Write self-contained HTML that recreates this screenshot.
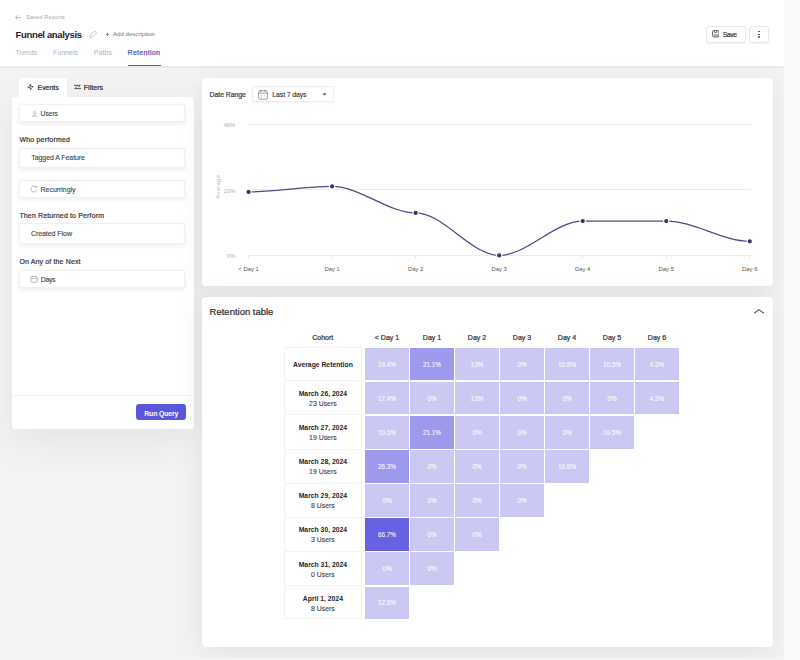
<!DOCTYPE html>
<html><head><meta charset="utf-8"><style>
html,body{margin:0;padding:0;width:800px;height:660px;overflow:hidden;background:#f2f2f2}
body{position:relative;font-family:"Liberation Sans",sans-serif}
.b{position:absolute}
.t{position:absolute;white-space:nowrap;line-height:1}
</style></head><body>
<div class="b" style="left:0px;top:0px;width:784px;height:660px;background:#f3f3f3"></div>
<div class="b" style="left:0px;top:0px;width:784px;height:66px;background:#fff;box-shadow:0 1px 2px rgba(0,0,0,0.08)"></div>
<svg class="b" style="left:14px;top:14px" width="8" height="7" viewBox="0 0 8 7"><path d="M7 3.5H1.5M3.8 1.2L1.3 3.5L3.8 5.8" fill="none" stroke="#b5b5b5" stroke-width="0.9"/></svg>
<div class="t" style="left:26.00px;top:15px;font-size:5.8px;color:#a9a9a9;font-weight:normal;letter-spacing:0.053px;">Saved Reports</div>
<div class="t" style="left:15.60px;top:30px;font-size:9.5px;color:#1e1e1e;font-weight:bold;letter-spacing:-0.348px;">Funnel analysis</div>
<svg class="b" style="left:88.6px;top:29.8px" width="8.5" height="8.5" viewBox="0 0 8.5 8.5"><path d="M0.9 5.6L5.6 0.9L7.6 2.9L2.9 7.6L0.6 7.9Z M1.6 4.9L3.6 6.9" fill="none" stroke="#c2c2c2" stroke-width="0.85" stroke-linejoin="round"/></svg>
<svg class="b" style="left:105px;top:31.5px" width="5" height="5" viewBox="0 0 5 5"><path d="M2.5 0.9V4.1M0.9 2.5H4.1" stroke="#6a6a6a" stroke-width="0.75"/></svg>
<div class="t" style="left:113.00px;top:31px;font-size:6.1px;color:#777;font-weight:normal;letter-spacing:-0.003px;">Add description</div>
<div class="t" style="left:15.60px;top:49px;font-size:7.0px;color:#b3b3b3;font-weight:normal;letter-spacing:-0.025px;">Trends</div>
<div class="t" style="left:53.00px;top:49px;font-size:7.0px;color:#b3b3b3;font-weight:normal;letter-spacing:0.016px;">Funnels</div>
<div class="t" style="left:93.75px;top:49px;font-size:7.0px;color:#b3b3b3;font-weight:normal;letter-spacing:0.088px;">Paths</div>
<div class="t" style="left:127.50px;top:49px;font-size:7.2px;color:#5656b4;font-weight:normal;letter-spacing:0.210px;-webkit-text-stroke:0.22px currentColor">Retention</div>
<div class="b" style="left:127.5px;top:64.5px;width:33.0px;height:1.5px;background:#5c5cb8"></div>
<div class="b" style="left:706px;top:25.5px;width:40px;height:17.5px;background:#fff;border:1px solid #e8e8e8;border-radius:3px;box-sizing:border-box;box-shadow:0 1px 2px rgba(0,0,0,0.05)"></div>
<svg class="b" style="left:711.6px;top:30.4px" width="7.5" height="7.5" viewBox="0 0 7.5 7.5"><rect x="0.55" y="0.55" width="6.4" height="6.4" rx="1.2" fill="none" stroke="#555" stroke-width="0.9"/><path d="M2.5 0.6V2.4H5V0.6M2.3 6.9V4.7H5.2V6.9" fill="none" stroke="#555" stroke-width="0.8"/></svg>
<div class="t" style="left:722.70px;top:32px;font-size:6.8px;color:#3a3a3a;font-weight:normal;letter-spacing:-0.399px;-webkit-text-stroke:0.22px currentColor">Save</div>
<div class="b" style="left:749px;top:25.5px;width:20px;height:17.5px;background:#fff;border:1px solid #e8e8e8;border-radius:3px;box-sizing:border-box;box-shadow:0 1px 2px rgba(0,0,0,0.05)"></div>
<div class="b" style="left:758.3px;top:30.8px;width:1.400000000000091px;height:1.4000000000000021px;background:#444;border-radius:1px"></div>
<div class="b" style="left:758.3px;top:33.6px;width:1.400000000000091px;height:1.3999999999999986px;background:#444;border-radius:1px"></div>
<div class="b" style="left:758.3px;top:36.4px;width:1.400000000000091px;height:1.3999999999999986px;background:#444;border-radius:1px"></div>
<div class="b" style="left:12px;top:97px;width:181.7px;height:331.7px;background:#fff;border-radius:0 3px 3px 3px;box-shadow:0 10px 40px rgba(0,0,0,0.07)"></div>
<div class="b" style="left:19.4px;top:78px;width:47.6px;height:19.5px;background:#fff;border-radius:3px 3px 0 0"></div>
<svg class="b" style="left:27.3px;top:83px" width="7" height="8" viewBox="0 0 24 24"><polygon points="13 2 3 14 12 14 11 22 21 10 12 10 13 2" fill="none" stroke="#3a3a3a" stroke-width="2.6" stroke-linejoin="round"/></svg>
<div class="t" style="left:37.50px;top:84px;font-size:7.0px;color:#2e2e2e;font-weight:normal;letter-spacing:-0.030px;-webkit-text-stroke:0.22px currentColor">Events</div>
<svg class="b" style="left:74px;top:84px" width="7" height="6" viewBox="0 0 7 6"><path d="M0.4 1.4H6.3L4.6 2.9M6.6 4.6H0.7L2.4 3.1" fill="none" stroke="#3a3a3a" stroke-width="0.85" stroke-linejoin="round" stroke-linecap="round"/></svg>
<div class="t" style="left:83.75px;top:84px;font-size:7.0px;color:#2e2e2e;font-weight:normal;letter-spacing:0.033px;-webkit-text-stroke:0.22px currentColor">Filters</div>
<div class="b" style="left:19.2px;top:104px;width:166.20000000000002px;height:18.299999999999997px;background:#fff;border:1px solid #f0f0f0;border-radius:1.5px;box-sizing:border-box;box-shadow:0 2px 5px rgba(0,0,0,0.07)"></div>
<svg class="b" style="left:31.5px;top:110.5px" width="5" height="6.5" viewBox="0 0 5 6.5"><circle cx="2.5" cy="1.7" r="1.15" fill="none" stroke="#aaa" stroke-width="0.7"/><path d="M0.5 6Q0.6 3.9 2.5 3.9Q4.4 3.9 4.5 6Z" fill="none" stroke="#aaa" stroke-width="0.7"/></svg>
<div class="t" style="left:40.60px;top:111px;font-size:6.9px;color:#444;font-weight:normal;letter-spacing:-0.154px;-webkit-text-stroke:0.12px currentColor">Users</div>
<div class="t" style="left:19.40px;top:136px;font-size:7.0px;color:#3a3a3a;font-weight:normal;letter-spacing:0.196px;-webkit-text-stroke:0.22px currentColor">Who performed</div>
<div class="b" style="left:19.2px;top:147.5px;width:166.20000000000002px;height:20.5px;background:#fff;border:1px solid #f0f0f0;border-radius:1.5px;box-sizing:border-box;box-shadow:0 2px 5px rgba(0,0,0,0.07)"></div>
<div class="t" style="left:31.25px;top:154px;font-size:7.0px;color:#444;font-weight:normal;letter-spacing:-0.075px;-webkit-text-stroke:0.12px currentColor">Tagged A Feature</div>
<div class="b" style="left:19.2px;top:180px;width:166.20000000000002px;height:17.5px;background:#fff;border:1px solid #f0f0f0;border-radius:1.5px;box-sizing:border-box;box-shadow:0 2px 5px rgba(0,0,0,0.07)"></div>
<svg class="b" style="left:29.5px;top:185px" width="8" height="8" viewBox="0 0 8 8"><path d="M6.4 2.3A3 3 0 1 0 6.9 4.6" fill="none" stroke="#aaa" stroke-width="0.75"/><path d="M6.6 0.8V2.6H4.8" fill="none" stroke="#aaa" stroke-width="0.75"/></svg>
<div class="t" style="left:40.60px;top:186px;font-size:7.0px;color:#444;font-weight:normal;letter-spacing:-0.040px;-webkit-text-stroke:0.12px currentColor">Recurringly</div>
<div class="t" style="left:19.40px;top:212px;font-size:7.0px;color:#3a3a3a;font-weight:normal;letter-spacing:0.143px;-webkit-text-stroke:0.22px currentColor">Then Returned to Perform</div>
<div class="b" style="left:19.2px;top:222.7px;width:166.20000000000002px;height:21.30000000000001px;background:#fff;border:1px solid #f0f0f0;border-radius:1.5px;box-sizing:border-box;box-shadow:0 2px 5px rgba(0,0,0,0.07)"></div>
<div class="t" style="left:30.90px;top:230px;font-size:7.0px;color:#444;font-weight:normal;letter-spacing:-0.050px;-webkit-text-stroke:0.12px currentColor">Created Flow</div>
<div class="t" style="left:19.40px;top:258px;font-size:7.0px;color:#3a3a3a;font-weight:normal;letter-spacing:0.138px;-webkit-text-stroke:0.22px currentColor">On Any of the Next</div>
<div class="b" style="left:19.2px;top:269.7px;width:166.20000000000002px;height:18.19999999999999px;background:#fff;border:1px solid #f0f0f0;border-radius:1.5px;box-sizing:border-box;box-shadow:0 2px 5px rgba(0,0,0,0.07)"></div>
<svg class="b" style="left:29.8px;top:274.5px" width="8" height="8" viewBox="0 0 8 8"><rect x="0.7" y="1.5" width="6.6" height="5.8" rx="1.5" fill="none" stroke="#aaa" stroke-width="0.75"/><path d="M2.3 0.6V2.4M5.7 0.6V2.4M0.7 3.6H7.3" fill="none" stroke="#aaa" stroke-width="0.75"/></svg>
<div class="t" style="left:40.75px;top:276px;font-size:7.0px;color:#444;font-weight:normal;letter-spacing:-0.399px;-webkit-text-stroke:0.12px currentColor">Days</div>
<div class="b" style="left:12px;top:395.3px;width:181.7px;height:1.0px;background:#f3f3f3"></div>
<div class="b" style="left:136.3px;top:404.2px;width:49.5px;height:16.30000000000001px;background:#5b57dc;border-radius:3px"></div>
<div class="t" style="left:144.20px;top:411px;font-size:6.9px;color:#fff;font-weight:bold;letter-spacing:-0.122px;">Run Query</div>
<div class="b" style="left:201.6px;top:77.5px;width:571.4px;height:208.10000000000002px;background:#fff;border-radius:4px;box-shadow:0 4px 24px rgba(0,0,0,0.07)"></div>
<div class="t" style="left:209.60px;top:91px;font-size:7.0px;color:#444;font-weight:normal;letter-spacing:-0.107px;-webkit-text-stroke:0.22px currentColor">Date Range</div>
<div class="b" style="left:252.2px;top:86px;width:81.60000000000002px;height:15.900000000000006px;background:#fff;border:1px solid #eeeeee;border-radius:2px;box-sizing:border-box;box-shadow:0 1px 3px rgba(0,0,0,0.05)"></div>
<svg class="b" style="left:257.5px;top:88.5px" width="10" height="11" viewBox="0 0 10 11"><rect x="0.6" y="1.8" width="8.8" height="8.4" rx="1.6" fill="none" stroke="#777" stroke-width="0.7"/><path d="M3 0.5V3M7 0.5V3M0.6 4.2H9.4" stroke="#777" stroke-width="0.7"/><path d="M2.8 6.8H4.2M5.8 6.8H7.2M2.8 8.3H4.2" stroke="#999" stroke-width="0.6"/></svg>
<div class="t" style="left:272.30px;top:91px;font-size:7.0px;color:#333;font-weight:normal;letter-spacing:-0.150px;-webkit-text-stroke:0.12px currentColor">Last 7 days</div>
<svg class="b" style="left:322px;top:92.5px" width="5" height="3" viewBox="0 0 5 3"><path d="M0.4 0.4H4.6L2.5 2.6Z" fill="#444"/></svg>
<div class="t" style="left:224.00px;top:123px;font-size:5.6px;color:#b0b0b0;font-weight:normal;letter-spacing:-0.103px;">40%</div>
<div class="t" style="left:224.00px;top:189px;font-size:5.6px;color:#b0b0b0;font-weight:normal;letter-spacing:0.197px;">20%</div>
<div class="t" style="left:227.00px;top:254px;font-size:5.6px;color:#b0b0b0;font-weight:normal;letter-spacing:0.508px;">0%</div>
<div class="t" style="left:218.1px;top:187px;font-size:6.2px;color:#b8b8b8;transform:translate(-50%,-50%) rotate(-90deg);letter-spacing:0.15px">Average</div>
<div class="b" style="left:248px;top:124.1px;width:502.5px;height:1.0px;background:#ececec"></div>
<div class="b" style="left:248px;top:189.3px;width:502.5px;height:1.0px;background:#ececec"></div>
<div class="b" style="left:248px;top:255.1px;width:502.5px;height:1.0000000000000284px;background:#ececec"></div>
<div class="t" style="left:238.35px;top:267px;font-size:5.9px;color:#555;font-weight:normal;letter-spacing:0.000px;">&lt; Day 1</div>
<div class="b" style="left:248.2px;top:255.6px;width:0.8000000000000114px;height:2.4000000000000057px;background:#e6e6e6"></div>
<div class="t" style="left:324.42px;top:267px;font-size:5.9px;color:#555;font-weight:normal;letter-spacing:0.000px;">Day 1</div>
<div class="b" style="left:331.73px;top:255.6px;width:0.7999999999999545px;height:2.4000000000000057px;background:#e6e6e6"></div>
<div class="t" style="left:407.95px;top:267px;font-size:5.9px;color:#555;font-weight:normal;letter-spacing:0.000px;">Day 2</div>
<div class="b" style="left:415.26px;top:255.6px;width:0.7999999999999545px;height:2.4000000000000057px;background:#e6e6e6"></div>
<div class="t" style="left:491.48px;top:267px;font-size:5.9px;color:#555;font-weight:normal;letter-spacing:0.000px;">Day 3</div>
<div class="b" style="left:498.79px;top:255.6px;width:0.7999999999999545px;height:2.4000000000000057px;background:#e6e6e6"></div>
<div class="t" style="left:575.01px;top:267px;font-size:5.9px;color:#555;font-weight:normal;letter-spacing:0.000px;">Day 4</div>
<div class="b" style="left:582.32px;top:255.6px;width:0.7999999999999545px;height:2.4000000000000057px;background:#e6e6e6"></div>
<div class="t" style="left:658.54px;top:267px;font-size:5.9px;color:#555;font-weight:normal;letter-spacing:0.000px;">Day 5</div>
<div class="b" style="left:665.85px;top:255.6px;width:0.7999999999999545px;height:2.4000000000000057px;background:#e6e6e6"></div>
<div class="t" style="left:742.07px;top:267px;font-size:5.9px;color:#555;font-weight:normal;letter-spacing:0.000px;">Day 6</div>
<div class="b" style="left:749.38px;top:255.6px;width:0.7999999999999545px;height:2.4000000000000057px;background:#e6e6e6"></div>
<svg class="b" style="left:0;top:0" width="800" height="660"><path d="M248.60,191.96 C276.44,191.96 304.29,186.40 332.13,186.40 C359.97,186.40 387.82,212.89 415.66,212.89 C443.50,212.89 471.35,255.40 499.19,255.40 C527.03,255.40 554.88,221.06 582.72,221.06 C610.56,221.06 638.41,221.06 666.25,221.06 C694.09,221.06 721.94,241.34 749.78,241.34" fill="none" stroke="#4d4a85" stroke-width="1.3"/><circle cx="248.60" cy="191.96" r="2.7" fill="#37346f" stroke="#fff" stroke-width="1.1"/><circle cx="332.13" cy="186.40" r="2.7" fill="#37346f" stroke="#fff" stroke-width="1.1"/><circle cx="415.66" cy="212.89" r="2.7" fill="#37346f" stroke="#fff" stroke-width="1.1"/><circle cx="499.19" cy="255.40" r="2.7" fill="#37346f" stroke="#fff" stroke-width="1.1"/><circle cx="582.72" cy="221.06" r="2.7" fill="#37346f" stroke="#fff" stroke-width="1.1"/><circle cx="666.25" cy="221.06" r="2.7" fill="#37346f" stroke="#fff" stroke-width="1.1"/><circle cx="749.78" cy="241.34" r="2.7" fill="#37346f" stroke="#fff" stroke-width="1.1"/></svg>
<div class="b" style="left:201.6px;top:297.3px;width:571.4px;height:350.2px;background:#fff;border-radius:4px;box-shadow:0 4px 30px rgba(0,0,0,0.08)"></div>
<div class="t" style="left:209.60px;top:307px;font-size:9.5px;color:#2e2e2e;font-weight:normal;letter-spacing:-0.008px;-webkit-text-stroke:0.22px currentColor">Retention table</div>
<svg class="b" style="left:753px;top:308px" width="12" height="7" viewBox="0 0 12 7"><path d="M1.2 5.2L6 1.6L10.8 5.2" fill="none" stroke="#555" stroke-width="1.1"/></svg>
<div class="t" style="left:312.25px;top:334px;font-size:7.0px;color:#333;font-weight:normal;letter-spacing:0.000px;-webkit-text-stroke:0.22px currentColor">Cohort</div>
<div class="t" style="left:374.84px;top:334px;font-size:7.0px;color:#333;font-weight:normal;letter-spacing:0.000px;-webkit-text-stroke:0.22px currentColor">&lt; Day 1</div>
<div class="t" style="left:422.86px;top:334px;font-size:7.0px;color:#333;font-weight:normal;letter-spacing:0.000px;-webkit-text-stroke:0.22px currentColor">Day 1</div>
<div class="t" style="left:467.86px;top:334px;font-size:7.0px;color:#333;font-weight:normal;letter-spacing:0.000px;-webkit-text-stroke:0.22px currentColor">Day 2</div>
<div class="t" style="left:512.86px;top:334px;font-size:7.0px;color:#333;font-weight:normal;letter-spacing:0.000px;-webkit-text-stroke:0.22px currentColor">Day 3</div>
<div class="t" style="left:557.86px;top:334px;font-size:7.0px;color:#333;font-weight:normal;letter-spacing:0.000px;-webkit-text-stroke:0.22px currentColor">Day 4</div>
<div class="t" style="left:602.86px;top:334px;font-size:7.0px;color:#333;font-weight:normal;letter-spacing:0.000px;-webkit-text-stroke:0.22px currentColor">Day 5</div>
<div class="t" style="left:647.86px;top:334px;font-size:7.0px;color:#333;font-weight:normal;letter-spacing:0.000px;-webkit-text-stroke:0.22px currentColor">Day 6</div>
<div class="b" style="left:284.4px;top:347.3px;width:77.20000000000005px;height:272.09999999999997px;border:1px solid #f3f3f3;box-sizing:border-box;background:#fff"></div>
<div class="b" style="left:284.4px;top:380.30000000000007px;width:77.20000000000005px;height:1.0px;background:#f3f3f3"></div>
<div class="b" style="left:284.4px;top:414.40000000000003px;width:77.20000000000005px;height:1.0px;background:#f3f3f3"></div>
<div class="b" style="left:284.4px;top:448.50000000000006px;width:77.20000000000005px;height:1.0px;background:#f3f3f3"></div>
<div class="b" style="left:284.4px;top:482.6px;width:77.20000000000005px;height:1.0px;background:#f3f3f3"></div>
<div class="b" style="left:284.4px;top:516.7px;width:77.20000000000005px;height:1.0px;background:#f3f3f3"></div>
<div class="b" style="left:284.4px;top:550.8000000000001px;width:77.20000000000005px;height:1.0px;background:#f3f3f3"></div>
<div class="b" style="left:284.4px;top:584.9000000000001px;width:77.20000000000005px;height:1.0px;background:#f3f3f3"></div>
<div class="t" style="left:292.99px;top:362px;font-size:6.8px;color:#262626;font-weight:bold;letter-spacing:0.000px;">Average Retention</div>
<div class="b" style="left:365px;top:347.5px;width:44.0px;height:32.5px;background:#cbc9f4"></div>
<div class="t" style="left:377.93px;top:362px;font-size:6.4px;color:rgba(255,255,255,0.92);font-weight:normal;letter-spacing:0.000px;-webkit-text-stroke:0.12px currentColor">19.4%</div>
<div class="b" style="left:410px;top:347.5px;width:44.0px;height:32.5px;background:#9d9aee"></div>
<div class="t" style="left:422.93px;top:362px;font-size:6.4px;color:rgba(255,255,255,0.92);font-weight:normal;letter-spacing:0.000px;-webkit-text-stroke:0.12px currentColor">21.1%</div>
<div class="b" style="left:455px;top:347.5px;width:44.0px;height:32.5px;background:#cbc9f4"></div>
<div class="t" style="left:470.60px;top:362px;font-size:6.4px;color:rgba(255,255,255,0.92);font-weight:normal;letter-spacing:0.000px;-webkit-text-stroke:0.12px currentColor">13%</div>
<div class="b" style="left:500px;top:347.5px;width:44.0px;height:32.5px;background:#cbc9f4"></div>
<div class="t" style="left:517.38px;top:362px;font-size:6.4px;color:rgba(255,255,255,0.92);font-weight:normal;letter-spacing:0.000px;-webkit-text-stroke:0.12px currentColor">0%</div>
<div class="b" style="left:545px;top:347.5px;width:44.0px;height:32.5px;background:#cbc9f4"></div>
<div class="t" style="left:557.93px;top:362px;font-size:6.4px;color:rgba(255,255,255,0.92);font-weight:normal;letter-spacing:0.000px;-webkit-text-stroke:0.12px currentColor">10.5%</div>
<div class="b" style="left:590px;top:347.5px;width:44.0px;height:32.5px;background:#cbc9f4"></div>
<div class="t" style="left:602.93px;top:362px;font-size:6.4px;color:rgba(255,255,255,0.92);font-weight:normal;letter-spacing:0.000px;-webkit-text-stroke:0.12px currentColor">10.5%</div>
<div class="b" style="left:635px;top:347.5px;width:44.0px;height:32.5px;background:#cbc9f4"></div>
<div class="t" style="left:649.71px;top:362px;font-size:6.4px;color:rgba(255,255,255,0.92);font-weight:normal;letter-spacing:0.000px;-webkit-text-stroke:0.12px currentColor">4.3%</div>
<div class="t" style="left:298.71px;top:391px;font-size:6.8px;color:#262626;font-weight:bold;letter-spacing:0.000px;">March 26, 2024</div>
<div class="t" style="left:309.10px;top:401px;font-size:6.9px;color:#444;font-weight:normal;letter-spacing:0.000px;-webkit-text-stroke:0.12px currentColor">23 Users</div>
<div class="b" style="left:365px;top:381.5px;width:44.0px;height:32.5px;background:#cbc9f4"></div>
<div class="t" style="left:377.93px;top:396px;font-size:6.4px;color:rgba(255,255,255,0.92);font-weight:normal;letter-spacing:0.000px;-webkit-text-stroke:0.12px currentColor">17.4%</div>
<div class="b" style="left:410px;top:381.5px;width:44.0px;height:32.5px;background:#cbc9f4"></div>
<div class="t" style="left:427.38px;top:396px;font-size:6.4px;color:rgba(255,255,255,0.92);font-weight:normal;letter-spacing:0.000px;-webkit-text-stroke:0.12px currentColor">0%</div>
<div class="b" style="left:455px;top:381.5px;width:44.0px;height:32.5px;background:#cbc9f4"></div>
<div class="t" style="left:470.60px;top:396px;font-size:6.4px;color:rgba(255,255,255,0.92);font-weight:normal;letter-spacing:0.000px;-webkit-text-stroke:0.12px currentColor">13%</div>
<div class="b" style="left:500px;top:381.5px;width:44.0px;height:32.5px;background:#cbc9f4"></div>
<div class="t" style="left:517.38px;top:396px;font-size:6.4px;color:rgba(255,255,255,0.92);font-weight:normal;letter-spacing:0.000px;-webkit-text-stroke:0.12px currentColor">0%</div>
<div class="b" style="left:545px;top:381.5px;width:44.0px;height:32.5px;background:#cbc9f4"></div>
<div class="t" style="left:562.38px;top:396px;font-size:6.4px;color:rgba(255,255,255,0.92);font-weight:normal;letter-spacing:0.000px;-webkit-text-stroke:0.12px currentColor">0%</div>
<div class="b" style="left:590px;top:381.5px;width:44.0px;height:32.5px;background:#cbc9f4"></div>
<div class="t" style="left:607.38px;top:396px;font-size:6.4px;color:rgba(255,255,255,0.92);font-weight:normal;letter-spacing:0.000px;-webkit-text-stroke:0.12px currentColor">0%</div>
<div class="b" style="left:635px;top:381.5px;width:44.0px;height:32.5px;background:#cbc9f4"></div>
<div class="t" style="left:649.71px;top:396px;font-size:6.4px;color:rgba(255,255,255,0.92);font-weight:normal;letter-spacing:0.000px;-webkit-text-stroke:0.12px currentColor">4.3%</div>
<div class="t" style="left:298.71px;top:425px;font-size:6.8px;color:#262626;font-weight:bold;letter-spacing:0.000px;">March 27, 2024</div>
<div class="t" style="left:309.10px;top:435px;font-size:6.9px;color:#444;font-weight:normal;letter-spacing:0.000px;-webkit-text-stroke:0.12px currentColor">19 Users</div>
<div class="b" style="left:365px;top:416.0px;width:44.0px;height:32.5px;background:#cbc9f4"></div>
<div class="t" style="left:377.93px;top:430px;font-size:6.4px;color:rgba(255,255,255,0.92);font-weight:normal;letter-spacing:0.000px;-webkit-text-stroke:0.12px currentColor">10.5%</div>
<div class="b" style="left:410px;top:416.0px;width:44.0px;height:32.5px;background:#9d9aee"></div>
<div class="t" style="left:422.93px;top:430px;font-size:6.4px;color:rgba(255,255,255,0.92);font-weight:normal;letter-spacing:0.000px;-webkit-text-stroke:0.12px currentColor">21.1%</div>
<div class="b" style="left:455px;top:416.0px;width:44.0px;height:32.5px;background:#cbc9f4"></div>
<div class="t" style="left:472.38px;top:430px;font-size:6.4px;color:rgba(255,255,255,0.92);font-weight:normal;letter-spacing:0.000px;-webkit-text-stroke:0.12px currentColor">0%</div>
<div class="b" style="left:500px;top:416.0px;width:44.0px;height:32.5px;background:#cbc9f4"></div>
<div class="t" style="left:517.38px;top:430px;font-size:6.4px;color:rgba(255,255,255,0.92);font-weight:normal;letter-spacing:0.000px;-webkit-text-stroke:0.12px currentColor">0%</div>
<div class="b" style="left:545px;top:416.0px;width:44.0px;height:32.5px;background:#cbc9f4"></div>
<div class="t" style="left:562.38px;top:430px;font-size:6.4px;color:rgba(255,255,255,0.92);font-weight:normal;letter-spacing:0.000px;-webkit-text-stroke:0.12px currentColor">0%</div>
<div class="b" style="left:590px;top:416.0px;width:44.0px;height:32.5px;background:#cbc9f4"></div>
<div class="t" style="left:602.93px;top:430px;font-size:6.4px;color:rgba(255,255,255,0.92);font-weight:normal;letter-spacing:0.000px;-webkit-text-stroke:0.12px currentColor">10.5%</div>
<div class="t" style="left:298.71px;top:459px;font-size:6.8px;color:#262626;font-weight:bold;letter-spacing:0.000px;">March 28, 2024</div>
<div class="t" style="left:309.10px;top:469px;font-size:6.9px;color:#444;font-weight:normal;letter-spacing:0.000px;-webkit-text-stroke:0.12px currentColor">19 Users</div>
<div class="b" style="left:365px;top:450.0px;width:44.0px;height:32.5px;background:#9d9aee"></div>
<div class="t" style="left:377.93px;top:464px;font-size:6.4px;color:rgba(255,255,255,0.92);font-weight:normal;letter-spacing:0.000px;-webkit-text-stroke:0.12px currentColor">26.3%</div>
<div class="b" style="left:410px;top:450.0px;width:44.0px;height:32.5px;background:#cbc9f4"></div>
<div class="t" style="left:427.38px;top:464px;font-size:6.4px;color:rgba(255,255,255,0.92);font-weight:normal;letter-spacing:0.000px;-webkit-text-stroke:0.12px currentColor">0%</div>
<div class="b" style="left:455px;top:450.0px;width:44.0px;height:32.5px;background:#cbc9f4"></div>
<div class="t" style="left:472.38px;top:464px;font-size:6.4px;color:rgba(255,255,255,0.92);font-weight:normal;letter-spacing:0.000px;-webkit-text-stroke:0.12px currentColor">0%</div>
<div class="b" style="left:500px;top:450.0px;width:44.0px;height:32.5px;background:#cbc9f4"></div>
<div class="t" style="left:517.38px;top:464px;font-size:6.4px;color:rgba(255,255,255,0.92);font-weight:normal;letter-spacing:0.000px;-webkit-text-stroke:0.12px currentColor">0%</div>
<div class="b" style="left:545px;top:450.0px;width:44.0px;height:32.5px;background:#cbc9f4"></div>
<div class="t" style="left:557.93px;top:464px;font-size:6.4px;color:rgba(255,255,255,0.92);font-weight:normal;letter-spacing:0.000px;-webkit-text-stroke:0.12px currentColor">10.5%</div>
<div class="t" style="left:298.71px;top:493px;font-size:6.8px;color:#262626;font-weight:bold;letter-spacing:0.000px;">March 29, 2024</div>
<div class="t" style="left:311.01px;top:503px;font-size:6.9px;color:#444;font-weight:normal;letter-spacing:0.000px;-webkit-text-stroke:0.12px currentColor">8 Users</div>
<div class="b" style="left:365px;top:484.0px;width:44.0px;height:32.5px;background:#cbc9f4"></div>
<div class="t" style="left:382.38px;top:498px;font-size:6.4px;color:rgba(255,255,255,0.92);font-weight:normal;letter-spacing:0.000px;-webkit-text-stroke:0.12px currentColor">0%</div>
<div class="b" style="left:410px;top:484.0px;width:44.0px;height:32.5px;background:#cbc9f4"></div>
<div class="t" style="left:427.38px;top:498px;font-size:6.4px;color:rgba(255,255,255,0.92);font-weight:normal;letter-spacing:0.000px;-webkit-text-stroke:0.12px currentColor">0%</div>
<div class="b" style="left:455px;top:484.0px;width:44.0px;height:32.5px;background:#cbc9f4"></div>
<div class="t" style="left:472.38px;top:498px;font-size:6.4px;color:rgba(255,255,255,0.92);font-weight:normal;letter-spacing:0.000px;-webkit-text-stroke:0.12px currentColor">0%</div>
<div class="b" style="left:500px;top:484.0px;width:44.0px;height:32.5px;background:#cbc9f4"></div>
<div class="t" style="left:517.38px;top:498px;font-size:6.4px;color:rgba(255,255,255,0.92);font-weight:normal;letter-spacing:0.000px;-webkit-text-stroke:0.12px currentColor">0%</div>
<div class="t" style="left:298.71px;top:527px;font-size:6.8px;color:#262626;font-weight:bold;letter-spacing:0.000px;">March 30, 2024</div>
<div class="t" style="left:311.01px;top:537px;font-size:6.9px;color:#444;font-weight:normal;letter-spacing:0.000px;-webkit-text-stroke:0.12px currentColor">3 Users</div>
<div class="b" style="left:365px;top:518.0px;width:44.0px;height:32.5px;background:#6762e2"></div>
<div class="t" style="left:377.93px;top:532px;font-size:6.4px;color:rgba(255,255,255,0.92);font-weight:normal;letter-spacing:0.000px;-webkit-text-stroke:0.12px currentColor">66.7%</div>
<div class="b" style="left:410px;top:518.0px;width:44.0px;height:32.5px;background:#cbc9f4"></div>
<div class="t" style="left:427.38px;top:532px;font-size:6.4px;color:rgba(255,255,255,0.92);font-weight:normal;letter-spacing:0.000px;-webkit-text-stroke:0.12px currentColor">0%</div>
<div class="b" style="left:455px;top:518.0px;width:44.0px;height:32.5px;background:#cbc9f4"></div>
<div class="t" style="left:472.38px;top:532px;font-size:6.4px;color:rgba(255,255,255,0.92);font-weight:normal;letter-spacing:0.000px;-webkit-text-stroke:0.12px currentColor">0%</div>
<div class="t" style="left:298.71px;top:562px;font-size:6.8px;color:#262626;font-weight:bold;letter-spacing:0.000px;">March 31, 2024</div>
<div class="t" style="left:311.01px;top:572px;font-size:6.9px;color:#444;font-weight:normal;letter-spacing:0.000px;-webkit-text-stroke:0.12px currentColor">0 Users</div>
<div class="b" style="left:365px;top:552.0px;width:44.0px;height:32.5px;background:#cbc9f4"></div>
<div class="t" style="left:382.38px;top:566px;font-size:6.4px;color:rgba(255,255,255,0.92);font-weight:normal;letter-spacing:0.000px;-webkit-text-stroke:0.12px currentColor">0%</div>
<div class="b" style="left:410px;top:552.0px;width:44.0px;height:32.5px;background:#cbc9f4"></div>
<div class="t" style="left:427.38px;top:566px;font-size:6.4px;color:rgba(255,255,255,0.92);font-weight:normal;letter-spacing:0.000px;-webkit-text-stroke:0.12px currentColor">0%</div>
<div class="t" style="left:302.87px;top:596px;font-size:6.8px;color:#262626;font-weight:bold;letter-spacing:0.000px;">April 1, 2024</div>
<div class="t" style="left:311.01px;top:606px;font-size:6.9px;color:#444;font-weight:normal;letter-spacing:0.000px;-webkit-text-stroke:0.12px currentColor">8 Users</div>
<div class="b" style="left:365px;top:586.5px;width:44.0px;height:32.5px;background:#cbc9f4"></div>
<div class="t" style="left:377.93px;top:600px;font-size:6.4px;color:rgba(255,255,255,0.92);font-weight:normal;letter-spacing:0.000px;-webkit-text-stroke:0.12px currentColor">12.5%</div>
<div class="b" style="left:0px;top:657.5px;width:784px;height:2.5px;background:#f4f4f4"></div>
<div class="b" style="left:784px;top:0px;width:16px;height:660px;background:#f9f9f9"></div>
</body></html>
